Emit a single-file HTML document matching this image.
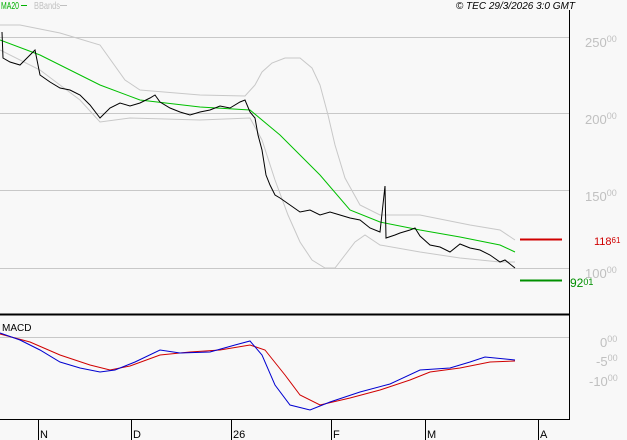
<!DOCTYPE html>
<html><head><style>
body{margin:0;background:#f8f8f8;}
svg{display:block;font-family:"Liberation Sans",sans-serif;}
</style></head><body>
<svg width="627" height="440" viewBox="0 0 627 440">
<rect width="627" height="440" fill="#f8f8f8"/>
<g stroke="#c8c8c8" stroke-width="1">
<line x1="0" y1="37.5" x2="569" y2="37.5"/>
<line x1="0" y1="113.5" x2="569" y2="113.5"/>
<line x1="0" y1="190.5" x2="569" y2="190.5"/>
<line x1="0" y1="268.5" x2="569" y2="268.5"/>
<line x1="0" y1="337.5" x2="569" y2="337.5"/>
</g>
<g fill="#c0c0c0" font-size="13">
<text x="585" y="47">250<tspan font-size="9" dy="-5">00</tspan></text>
<text x="585" y="124">200<tspan font-size="9" dy="-5">00</tspan></text>
<text x="585" y="201">150<tspan font-size="9" dy="-5">00</tspan></text>
<text x="585" y="278">100<tspan font-size="9" dy="-5">00</tspan></text>
<text x="600" y="347">0<tspan font-size="9" dy="-5">00</tspan></text>
<text x="596" y="366">-5<tspan font-size="9" dy="-5">00</tspan></text>
<text x="589" y="386">-10<tspan font-size="9" dy="-5">00</tspan></text>
</g>
<polyline fill="none" stroke="#c8c8c8" points="0,25 20,25 60,33 100,45 125,80 140,90 200,95 245,96 255,85 262,72 272,63 285,58 300,58 312,68 320,85 328,115 335,145 345,178 360,205 380,215 420,215 470,225 500,230 515,240"/>
<polyline fill="none" stroke="#c8c8c8" points="0,50 40,70 80,100 100,122 130,118 200,120 250,118 262,140 275,180 288,215 300,242 312,260 325,268 335,268 345,255 355,242 365,235 380,245 420,252 460,258 500,262 515,262"/>
<polyline fill="none" stroke="#00c000" points="0,40 40,55 100,85 140,100 200,107 250,110 280,135 320,175 350,210 380,222 420,230 460,237 500,245 515,252"/>
<polyline fill="none" stroke="#000" points="2,32 3,58 10,62 20,65 30,55 35,50 40,75 50,82 60,88 70,90 80,95 90,105 100,118 110,108 120,103 130,106 140,103 150,98 155,95 160,102 170,108 180,112 190,115 200,112 210,110 220,106 230,108 240,102 245,100 250,112 255,118 258,135 262,150 266,175 270,185 275,195 280,198 290,205 300,212 310,210 320,215 330,212 340,215 350,218 360,220 370,228 380,232 385,186 386,238 395,235 400,233 410,230 415,228 420,236 430,245 440,247 450,252 460,244 470,248 480,250 490,255 500,262 505,260 510,264 515,268"/>
<line x1="520" y1="239.5" x2="562" y2="239.5" stroke="#d00000" stroke-width="2"/>
<line x1="520" y1="280.5" x2="562" y2="280.5" stroke="#009000" stroke-width="2"/>
<text x="594" y="245" fill="#d00000" font-size="11">118<tspan font-size="8" dy="-2">61</tspan></text>
<text x="570" y="287" fill="#009000" font-size="12">92<tspan font-size="9" dy="-2">01</tspan></text>
<polyline fill="none" stroke="#d00000" points="0,334 30,342 60,355 90,365 110,370 130,366 160,355 190,352 220,350 250,345 265,350 285,375 300,395 320,405 350,398 380,390 410,380 430,372 460,368 490,362 515,361"/>
<polyline fill="none" stroke="#0000d0" points="0,333 20,340 40,350 60,362 80,368 100,372 115,370 135,362 160,350 180,353 210,352 235,345 250,341 262,355 275,385 290,405 310,410 330,402 360,392 390,384 420,370 450,368 470,362 485,357 515,360"/>
<line x1="569.5" y1="10" x2="569.5" y2="419" stroke="#000"/>
<line x1="0" y1="314.5" x2="570" y2="314.5" stroke="#000" stroke-width="2"/>
<line x1="0" y1="419.5" x2="570" y2="419.5" stroke="#000"/>
<g stroke="#000">
<line x1="38.5" y1="419" x2="38.5" y2="440"/>
<line x1="131.5" y1="419" x2="131.5" y2="440"/>
<line x1="231.5" y1="419" x2="231.5" y2="440"/>
<line x1="331.5" y1="419" x2="331.5" y2="440"/>
<line x1="425.5" y1="419" x2="425.5" y2="440"/>
<line x1="538.5" y1="419" x2="538.5" y2="440"/>
</g>
<g font-size="11" fill="#000">
<text x="40" y="438">N</text><text x="133" y="438">D</text><text x="233" y="438">26</text>
<text x="333" y="438">F</text><text x="427" y="438">M</text><text x="540" y="438">A</text>
<text x="2" y="331" font-size="10">MACD</text>
</g>
<text x="1" y="9" font-size="10" fill="#00b000" textLength="18" lengthAdjust="spacingAndGlyphs">MA20</text>
<line x1="21" y1="5.5" x2="27" y2="5.5" stroke="#00b000"/>
<text x="34" y="9" font-size="10" fill="#c0c0c0" textLength="26" lengthAdjust="spacingAndGlyphs">BBands</text>
<line x1="60" y1="5.5" x2="67" y2="5.5" stroke="#c0c0c0"/>
<text x="575" y="9" font-size="10" font-style="italic" fill="#000" text-anchor="end">© TEC 29/3/2026 3:0 GMT</text>
</svg>
</body></html>
